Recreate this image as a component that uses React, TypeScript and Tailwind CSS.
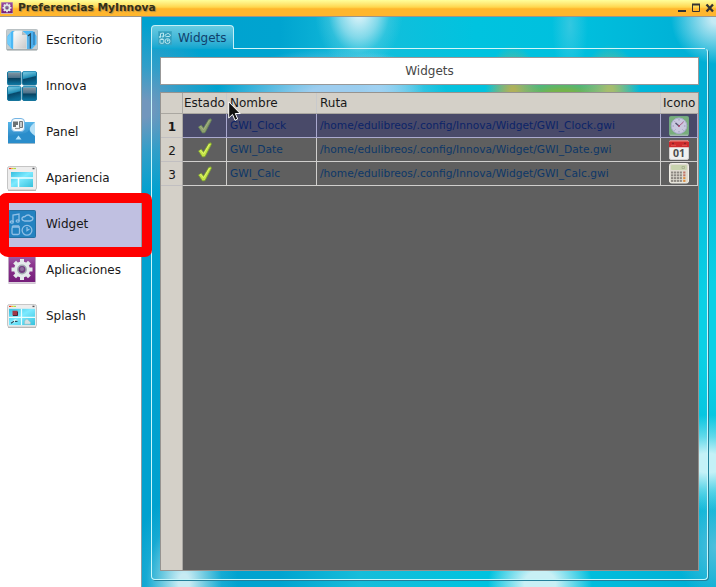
import type { ReactNode } from "react";

const svgBase = "block shrink-0";

function DesktopIcon() {
  return (
    <svg className={svgBase} width="32" height="22" viewBox="0 0 32 22">
      <defs>
        <linearGradient id="dk" x1="0" y1="0" x2="1" y2="1">
          <stop offset="0" stopColor="#ffffff" />
          <stop offset="1" stopColor="#c8c8c8" />
        </linearGradient>
      </defs>
      <rect x="0.5" y="0.5" width="31" height="20.5" rx="1" fill="#c4cdd0" stroke="#b9c1c4" />
      <path d="M6 2 L1.500 7 V15 L6 20 H26 L30.500 15 V7 L27 2 Z" fill="#4cb8f5" />
      <path d="M5 3 L1.500 8 V14 L5 19 Z" fill="#6fcdfd" />
      <path d="M7.500 3 L9 2 H16 L20.500 6 V20 H7.500 Z" fill="url(#dk)" stroke="#e9eeee" strokeWidth=".6" />
      <path d="M16 2 L20.500 6 H16 Z" fill="#b5bdc1" />
      <path d="M21.500 5 H24 V20 H21.500 Z" fill="#5db0e4" />
      <path d="M22 7 L24.300 5 V19.500" fill="none" stroke="#24414f" strokeWidth="1.100" />
      <path d="M25 4 L28.500 2.500 V15 L25 19 Z" fill="#4aaeee" />
      <path d="M28 3 V16" stroke="#2c6d9c" strokeWidth="1" />
      <path d="M1 20.800 H31" stroke="#8d9396" strokeWidth=".8" />
    </svg>
  );
}

function InnovaIcon() {
  return (
    <svg className={svgBase} width="30" height="30" viewBox="0 0 30 30">
      <defs>
        <linearGradient id="in1" x1="0" y1="0" x2="0" y2="1">
          <stop offset="0" stopColor="#8f9ca5" />
          <stop offset=".48" stopColor="#47708a" />
          <stop offset=".52" stopColor="#07405e" />
          <stop offset="1" stopColor="#0d7ba8" />
        </linearGradient>
        <linearGradient id="in2" x1="0" y1="0" x2=".25" y2="1">
          <stop offset="0" stopColor="#8ed5e8" />
          <stop offset=".5" stopColor="#2390b8" />
          <stop offset=".58" stopColor="#07486a" />
          <stop offset="1" stopColor="#0b6c96" />
        </linearGradient>
      </defs>
      <g stroke="#16749b" strokeWidth="1">
        <rect x=".5" y=".5" width="13.500" height="13.500" rx="1.500" fill="url(#in1)" />
        <rect x="15.500" y=".5" width="14" height="13.500" rx="1.500" fill="url(#in2)" />
        <rect x=".5" y="15.500" width="13.500" height="14" rx="1.500" fill="url(#in2)" />
        <rect x="15.500" y="15.500" width="14" height="14" rx="1.500" fill="url(#in1)" />
      </g>
      <path d="M1 1H13.500M16 1H29M1 16H13.500M16 16H29" stroke="#51b7dc" strokeWidth="1" />
    </svg>
  );
}

function PanelIcon() {
  return (
    <svg className={svgBase} width="28" height="28" viewBox="0 0 28 28">
      <defs>
        <linearGradient id="pn" x1="0" y1="0" x2="0" y2="1">
          <stop offset="0" stopColor="#56b5e8" />
          <stop offset="1" stopColor="#1b78b9" />
        </linearGradient>
      </defs>
      <rect x="0" y="4" width="27" height="21" fill="url(#pn)" />
      <path d="M27 4 V18 C23 15 20 12 23 8 Z" fill="#b5e0f7" />
      <path d="M0 20 C8 14 18 18 21 12 C23 16 25 18 27 18 V25 H0Z" fill="#2a8dcb" />
      <path d="M7.500 21.500 L10.500 17.500 L13.500 21.500 Z" fill="#b5e3fa" />
      <path d="M0 25.500 H27" stroke="#9cb9ca" />
      <rect x="3.500" y=".5" width="13" height="13" rx="3.500" fill="#f5f9fc" stroke="#75b5e4" />
      <path d="M5 3.500 H10 V7 H8 V9 H5Z" fill="#6b7174" />
      <path d="M11.500 3.500 H14.500 V9.500 H11.500Z" fill="#c5c9cb" stroke="#737779" />
      <path d="M7 10.500 H12" stroke="#999" strokeWidth="1.200" />
    </svg>
  );
}

function WindowIcon({ splash = false }: { splash?: boolean }) {
  return (
    <svg className={svgBase} width="30" height={splash ? 24 : 25} viewBox="0 0 30 25" preserveAspectRatio="none">
      <defs>
        <linearGradient id="wn" x1="0" y1="0" x2="1" y2="1">
          <stop offset="0" stopColor="#36bfe0" />
          <stop offset=".45" stopColor="#7deaff" />
          <stop offset="1" stopColor="#36c1dc" />
        </linearGradient>
      </defs>
      <rect x=".5" y=".5" width="29" height="23.500" rx="2" fill="#ededed" stroke="#c5c5c5" />
      <path d="M2 2.500 H4.500" stroke="#ef3a22" strokeWidth="1.200" />
      <path d="M4.500 2.500 H6.500" stroke="#f4ba25" strokeWidth="1.200" />
      <path d="M6.500 2.500 H9" stroke="#a5e04a" strokeWidth="1.200" />
      <path d="M25.500 2.500 H27.500" stroke="#55565a" strokeWidth="1.500" />
      <rect x={splash ? 2 : 4} y={splash ? 5 : 6} width={splash ? 26 : 22} height={splash ? 17 : 15} fill="url(#wn)" />
      {splash ? (
        <>
          <path d="M2 14 H28 M14.500 5 V22" stroke="#e8feff" strokeWidth="1.200" />
          <rect x="5.500" y="7" width="5" height="5" fill="#a23748" />
          <path d="M10.500 8 V12 H6" fill="none" stroke="#4c2435" />
          <path d="M4 19 L8 16 L11 17 L6 20Z" fill="#dff" />
          <path d="M4 20 L7 18 M8 18 H10.500" stroke="#244e61" strokeWidth="1.300" />
          <path d="M17.500 20 Q17.500 15 20.500 16 L23.500 19 V21 H17.500Z" fill="#d5e1e3" stroke="#8bbac2" strokeWidth=".5" />
        </>
      ) : (
        <path d="M4 12 H26 M11.500 12 V21" stroke="#effeff" strokeWidth="1.500" />
      )}
      <path d="M1 24.500 H29" stroke="#aaa" strokeWidth=".8" />
    </svg>
  );
}

function WidgetGlyph({ size, pale = false }: { size: number; pale?: boolean }) {
  return (
    <svg className={svgBase} width={size} height={size} viewBox="0 0 28 28">
      <rect x=".5" y=".5" width="27" height="27" rx="1" fill={pale ? "#329ebd" : "#2482c0"} stroke={pale ? "#42aac5" : "#256fa2"} />
      <g fill="none" stroke={pale ? "#bceaf1" : "#8fbfe5"} strokeWidth={pale ? 1.9 : 1.3}>
        <path d="M5 12 V5 L11 4 V11" />
        <ellipse cx="3.800" cy="12" rx="1.500" ry="1.200" />
        <ellipse cx="9.700" cy="11" rx="1.500" ry="1.200" />
        <path d="M16.500 11 C13 10 13 7 17 6.500 C18.500 4.500 22 4.500 22.500 6.500 C26 7 25.500 10.500 22 11Z" />
        <rect x="4" y="17" width="7.500" height="7.500" rx="1.500" />
        <path d="M4 17 L5 16 H10.500 L11.500 17" />
        <circle cx="19" cy="20.300" r="4.900" />
        <path d="M19 17 V20.500 L21.500 19" />
      </g>
    </svg>
  );
}

function GearIcon({ size }: { size: number }) {
  return (
    <svg className={svgBase} width={size} height={size} viewBox="0 0 28 28">
      <defs>
        <linearGradient id="gp" x1="0" y1="0" x2="0" y2="1">
          <stop offset="0" stopColor="#9c5ba5" />
          <stop offset=".3" stopColor="#8d368f" />
          <stop offset="1" stopColor="#731b78" />
        </linearGradient>
      </defs>
      <rect x=".5" y=".5" width="27" height="27" rx="1" fill="url(#gp)" stroke="#bda6c1" />
      <path d="M0 26.800 H28" stroke="#e0dce2" strokeWidth="1.500" />
      <g fill="#e4eaeb">
        <circle cx="14" cy="13.500" r="8" />
        <rect x="12" y="3" width="4" height="21" />
        <rect x="12" y="3" width="4" height="21" transform="rotate(45 14 13.500)" />
        <rect x="12" y="3" width="4" height="21" transform="rotate(90 14 13.500)" />
        <rect x="12" y="3" width="4" height="21" transform="rotate(135 14 13.500)" />
      </g>
      <circle cx="14" cy="13.500" r="4.200" fill="#713b80" stroke="#a2abb0" strokeWidth="1.500" />
      <circle cx="14" cy="13" r="2" fill="#8e6f9c" />
    </svg>
  );
}

function Check({ dim = false }: { dim?: boolean }) {
  return (
    <svg className={svgBase} width="16" height="16" viewBox="0 0 16 16">
      <path d="M1.500 9 L4.300 7.300 L6.500 10.200 L11.800 1.400 L14 .8 L14.300 2.400 L8 14.600 L5.500 15Z" fill={dim ? "#8ea06e" : "#c4e545"} stroke={dim ? "#6b8a58" : "#7da530"} strokeWidth=".8" />
      <path d="M2.500 9 L4 8.500 L6.500 12 L12.500 2" fill="none" stroke={dim ? "#a3b084" : "#def46a"} strokeWidth="1" />
    </svg>
  );
}

function ClockIcon() {
  return (
    <svg className={svgBase} width="20" height="20" viewBox="0 0 20 20">
      <rect x=".5" y=".5" width="19" height="19" rx="1" fill="#78ae7c" stroke="#71a780" />
      <path d="M1 19.200 H19" stroke="#b5bdc2" />
      <circle cx="10" cy="9.800" r="7.800" fill="#c9c8df" stroke="#a9adcd" />
      <path d="M10 3V4.500M10 15V16.500M3.500 10H5M15 10H16.500M5.500 5.300L6.500 6.300M14.500 5.300L13.500 6.300M5.500 14.500L6.500 13.500M14.500 14.500L13.500 13.500" stroke="#8e8bad" strokeWidth=".8" />
      <path d="M6.500 7 L10 10" stroke="#51506e" strokeWidth="1.400" />
      <path d="M10 10 L14.500 6" stroke="#a64d7a" strokeWidth=".9" />
      <circle cx="10" cy="10" r="1" fill="#a04468" />
    </svg>
  );
}

function CalendarIcon() {
  return (
    <svg className={svgBase} width="20" height="20" viewBox="0 0 20 20">
      <rect x=".5" y=".5" width="19" height="19" rx="1.500" fill="#f0f0ef" stroke="#d2d0cf" />
      <path d="M1.500 .5 H18.500 L20 2 V7.200 H0 V2Z" fill="#cf2a2c" />
      <path d="M1 1.500H19" stroke="#e25b55" />
      <path d="M3 3.500H5M15 3.500H17" stroke="#8d2227" strokeWidth="1.500" />
      <path d="M2 5.300H7M13 5.300H18" stroke="#e56b64" strokeWidth=".7" />
      <text x="10" y="17" textAnchor="middle" fontFamily="Open Sans, sans-serif" fontSize="10.5" fontWeight="700" fill="#4d4d4d">01</text>
    </svg>
  );
}

function CalculatorIcon() {
  return (
    <svg className={svgBase} width="20" height="21" viewBox="0 0 20 21">
      <rect x=".5" y=".5" width="19" height="19.500" rx="2" fill="#dedbd0" stroke="#f0eee6" />
      <rect x="2" y="2" width="16" height="5" rx="1" fill="#c8d3ae" />
      <path d="M13 3.500H15.500V5.500H13Z" fill="none" stroke="#a3ac8b" strokeWidth=".8" />
      {[8.5, 11.3, 14.1, 16.9].map((y) =>
        [2, 4.9, 7.8, 10.7, 14.2].map((x, i) => (
          <rect key={x + "-" + y} x={x} y={y} width="2.200" height="2" fill={i === 4 ? (y > 12 ? "#df8d3d" : "#c17466") : "#8d8982"} />
        )),
      )}
    </svg>
  );
}

const places: { label: string; icon: ReactNode; selected?: boolean }[] = [
  { label: "Escritorio", icon: <DesktopIcon /> },
  { label: "Innova", icon: <InnovaIcon /> },
  { label: "Panel", icon: <PanelIcon /> },
  { label: "Apariencia", icon: <WindowIcon /> },
  { label: "Widget", icon: <WidgetGlyph size={28} />, selected: true },
  { label: "Aplicaciones", icon: <GearIcon size={28} /> },
  { label: "Splash", icon: <WindowIcon splash /> },
];

const widgets = [
  { name: "GWI_Clock", icon: <ClockIcon />, current: true },
  { name: "GWI_Date", icon: <CalendarIcon />, current: false },
  { name: "GWI_Calc", icon: <CalculatorIcon />, current: false },
];

const cols = "grid grid-cols-[22px_44px_90px_344px_37px]";

function TitleBar() {
  return (
    <header className="flex h-[17px] items-center border-b border-[#9a958c] bg-linear-to-b from-[#ffff9b] from-0% via-[#ffd64c] via-45% to-[#ffb62d] to-55%">
      <div className="ml-[1px] mt-[-1px]"><GearIcon size={12} /></div>
      <h1 className="-mt-px ml-[5px] text-[10.67px] leading-[15px] font-bold text-[#333018] [text-shadow:1px_1px_1px_#b08d45]">Preferencias MyInnova</h1>
      <svg className="ml-auto block" width="40" height="16" viewBox="0 0 40 16">
        <path d="M2 11H10" stroke="#333" strokeWidth="2" />
        <path d="M16.500 4.500H23.500V11.500H16.500Z" fill="none" stroke="#333" />
        <path d="M16 4.500H24" stroke="#333" strokeWidth="2" />
        <path d="M30.500 4.500L37 11.500M37 4.500L30.500 11.500" stroke="#333" strokeWidth="2.300" />
      </svg>
    </header>
  );
}

export default function App() {
  return (
    <div className="relative flex h-[587px] w-[716px] flex-col overflow-hidden bg-white font-['DejaVu_Sans',sans-serif] text-[12px] text-[#181818]">
      <TitleBar />
      <div className="flex min-h-0 flex-1">
        <nav className="w-[142px] shrink-0 border-r border-[#8b9da5] bg-white">
          {places.map((p) => (
            <div key={p.label} className={p.selected ? "flex h-[46px] items-center bg-[#c0c0e1]" : "flex h-[46px] items-center"}>
              <div className="flex w-[46px] shrink-0 justify-center pr-[2px]">{p.icon}</div>
              <span className="leading-[16px]">{p.label}</span>
            </div>
          ))}
        </nav>
        <main className="flex flex-1 flex-col bg-[radial-gradient(ellipse_44px_60px_at_217px_-6px,#d5f1f8_10%,#a5e2efc0_45%,#60cfe360_70%,transparent_100%),radial-gradient(ellipse_45px_45px_at_574px_2px,#c5eaf4_10%,transparent_100%),radial-gradient(ellipse_75px_85px_at_2px_92px,#7297bd_10%,#4f9dc5a0_50%,transparent_100%),radial-gradient(ellipse_115px_46px_at_190px_78px,#9dcdef_20%,transparent_100%),radial-gradient(ellipse_50px_38px_at_232px_73px,#a5dcfa_10%,transparent_100%),radial-gradient(ellipse_28px_48px_at_371px_76px,#b0b15a_10%,transparent_100%),radial-gradient(ellipse_30px_46px_at_468px_74px,#a5bd6e_10%,transparent_100%),radial-gradient(ellipse_75px_25px_at_420px_78px,#75b34c_20%,transparent_100%),radial-gradient(ellipse_18px_55px_at_428px_8px,#51cce2a0,transparent_100%),radial-gradient(ellipse_54px_90px_at_42px_566px,#c7ebf3_10%,#8fd6e5c0_40%,#45bddc50_70%,transparent_100%),radial-gradient(ellipse_52px_45px_at_398px_567px,#c8f0f5_30%,transparent_100%),radial-gradient(ellipse_80px_48px_at_566px_446px,#c4f1f7_20%,#8ae3efb0_55%,transparent_100%),radial-gradient(ellipse_40px_55px_at_574px_530px,#50bfdc,transparent_100%),radial-gradient(ellipse_80px_220px_at_574px_310px,#0bd0e5_20%,transparent_100%),linear-gradient(90deg,#00a1cf_0%,#00a4d0_24%,#16bdda_38%,#00c3df_58%,#00c0de_75%,#00add4_100%)]">
          <div className="ml-[9px] mt-[8px] flex h-[24px] w-[83px] shrink-0 items-center rounded-t-[4px] border border-b-0 border-[#c5eff6] bg-linear-to-b from-[#66cbe1] to-[#08a6d0] pl-[6px]">
            <WidgetGlyph size={14} pale />
            <span className="ml-[6px] text-[12px] text-[#10416c]">Widgets</span>
          </div>
          <section className="mb-[7px] ml-[9px] mr-[8px] -mt-px flex min-h-0 flex-1 flex-col rounded-r-[4px] rounded-bl-[4px] border border-[#c8f7fb] [border-top-color:transparent] px-[8px] pb-[8px] shadow-[1px_1px_0_#237f99]">
            <div className="-mt-px -mr-[6px] ml-[74px] h-px shrink-0 bg-[#d3f5f9]" />
            <div className="mt-[8px] flex h-[28px] shrink-0 items-center justify-center border border-[#989898] bg-white text-[12px] text-[#474747]">Widgets</div>
            <div className="mt-[7px] flex min-h-0 flex-1 flex-col border border-[#969390] bg-[#5f5f5f]">
              <div className={cols + " h-[21px] shrink-0 items-stretch border-b border-[#aaa7a1] bg-[#d4d0c8] leading-[20px]"}>
                <div className="border-r border-[#aaa8a4]" />
                <div className="border-r border-[#c8c9cc] pl-[1px]">Estado</div>
                <div className="border-r border-[#c8c9cc] pl-[3px]">Nombre</div>
                <div className="border-r border-[#c8c9cc] pl-[3px]">Ruta</div>
                <div className="pl-[2px]">Icono</div>
              </div>
              {widgets.map((w, i) => (
                <div key={w.name} className={cols + " h-[24px] shrink-0 grid-rows-[24px] text-[10.67px] leading-[23px] " + (w.current ? "bg-[#494a69] text-[#0c2468]" : "text-[#0d3768]")}>
                  <div className={"border-r border-b border-r-[#aaa8a4] border-b-[#c1bfc1] bg-[#d4d0c8] pt-[4px] pl-px text-center text-[12px] leading-[19px] text-[#181818]" + (w.current ? " font-bold" : "")}>{i + 1}</div>
                  <div className={"flex items-center justify-center border-r border-b " + (w.current ? "border-[#aaa9ce]" : "border-[#d0cfcd]")}><Check dim={w.current} /></div>
                  <div className={"border-r border-b pl-[3px] " + (w.current ? "border-[#aaa9ce]" : "border-[#d0cfcd]")}>{w.name}</div>
                  <div className={"border-r border-b pl-[3px] " + (w.current ? "border-[#aaa9ce]" : "border-[#d0cfcd]")}>/home/edulibreos/.config/Innova/Widget/{w.name}.gwi</div>
                  <div className={"flex items-center justify-center border-r border-b " + (w.current ? "border-[#aaa9ce]" : "border-[#d0cfcd]")}>{w.icon}</div>
                </div>
              ))}
              <div className="w-[22px] flex-1 border-r border-[#aaa8a4] bg-[#d4d0c8]" />
            </div>
          </section>
        </main>
      </div>
      <div className="absolute -left-px top-[193px] h-[64px] w-[153px] rounded-[7px] border-[10px] border-[#fe0000] [border-bottom-left-radius:9px]" />
      <svg className="absolute left-[228px] top-[101px]" width="13" height="21" viewBox="0 0 13 21">
        <path d="M.7 .8V17L4.500 13.400L7 19.300L9.700 18L7.300 12.500H12.200Z" fill="#111" stroke="#fff" strokeWidth="1" />
      </svg>
    </div>
  );
}
